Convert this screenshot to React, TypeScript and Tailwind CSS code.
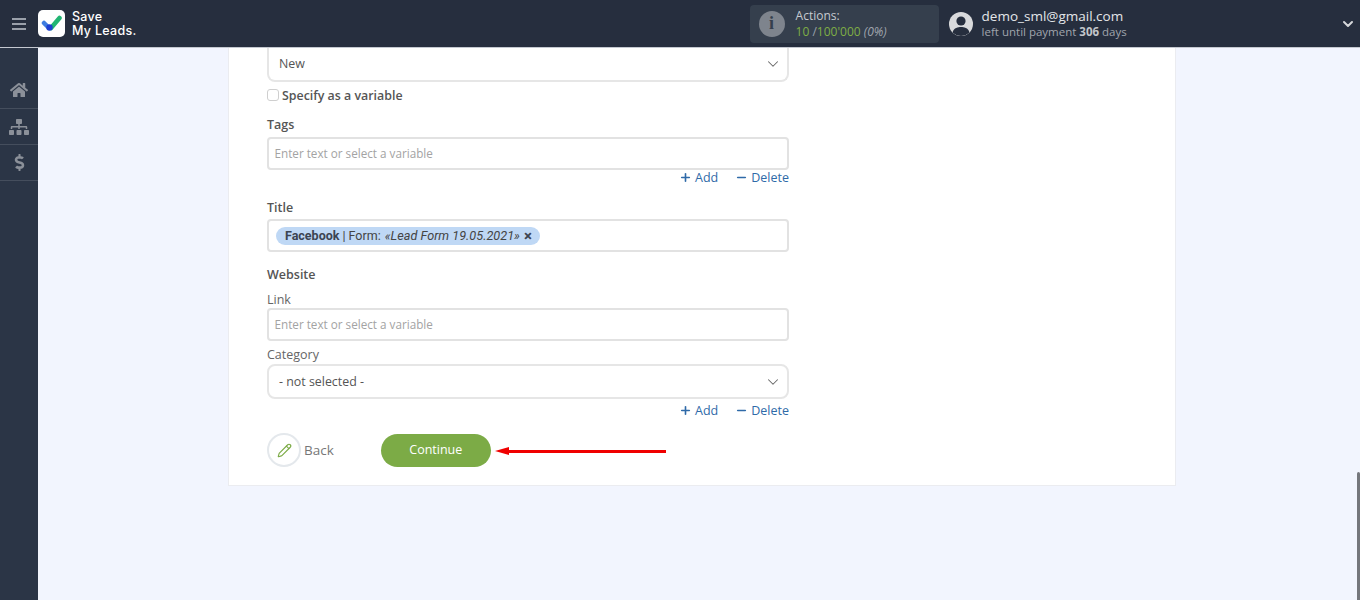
import { ChevronDown, Minus, Pencil, Plus } from 'lucide-react'
import { FaDollarSign, FaHome, FaSitemap } from 'react-icons/fa'

function AddDelete() {
  return (
    <div className="flex justify-end gap-[17px] h-[17px] text-[12.5px] leading-[17px] text-[#2f6aa8]">
      <span className="flex items-center gap-[3px]">
        <Plus size={13} strokeWidth={3} />
        Add
      </span>
      <span className="flex items-center gap-[3px]">
        <Minus size={13} strokeWidth={3} />
        Delete
      </span>
    </div>
  )
}

function TextField() {
  return (
    <div className="h-[33px] rounded-[4px] border-2 border-[#e2e2e2] bg-white pl-[5.5px] flex items-center text-[11.7px] text-[#a3a3a3]">
      Enter text or select a variable
    </div>
  )
}

function SelectField({ value, className }: { value: string; className: string }) {
  return (
    <div className={`rounded-[8px] border-2 border-[#e6e6e6] bg-white pl-[10px] pr-[5px] flex items-center justify-between text-[12.4px] text-[#555] ${className}`}>
      {value}
      <ChevronDown size={18} strokeWidth={1.4} className="text-[#666]" />
    </div>
  )
}

export default function App() {
  return (
    <div className="relative h-[600px] overflow-hidden bg-[#f2f5fe] font-['Open_Sans',sans-serif]">
      <header className="h-[48px] bg-[#262e3e] border-b border-[#c4c8d0] flex items-center text-white">
        <div className="w-[38px] flex justify-center">
          <div className="flex flex-col gap-[3px] w-[14px]">
            <span className="h-[2px] bg-[#9aa0aa]" />
            <span className="h-[2px] bg-[#9aa0aa]" />
            <span className="h-[2px] bg-[#9aa0aa]" />
          </div>
        </div>
        <div className="w-[27px] h-[27px] rounded-[5px] bg-white flex items-center justify-center">
          <svg width="21" height="17" viewBox="0 0 21 17" fill="none">
            <path d="M10 13 L18.5 3" stroke="#22b573" strokeWidth="4.5" strokeLinecap="round" />
            <path d="M3 8 L8 13" stroke="#3f7de0" strokeWidth="4.5" strokeLinecap="round" />
            <circle cx="8.5" cy="12.5" r="3.2" fill="#1f3fd0" />
          </svg>
        </div>
        <div className="ml-[7px] font-['Inter',sans-serif] font-medium text-[12.5px] leading-[14px] tracking-[0.3px] mt-[1px]">
          <div>Save</div>
          <div>My Leads.</div>
        </div>
        <div className="ml-[613px] w-[189px] h-[38px] rounded-[4px] bg-[#353f4d] flex items-center pl-[9px]">
          <div className="w-[26px] h-[26px] rounded-full bg-[#7e848d] flex items-center justify-center font-['Liberation_Serif',serif] font-bold text-[18px] text-[#353f4d]">
            i
          </div>
          <div className="ml-[11px] text-[12px] leading-[15px] -mt-[1px]">
            <div className="text-[#c6cad0]">Actions:</div>
            <div className="text-[12px] mt-[1px] text-[#7fae45]">
              10 <span className="text-[#9aa0aa]">/</span>100'000 <i className="text-[#a0a5ad]">(0%)</i>
            </div>
          </div>
        </div>
        <div className="ml-[10px] w-[24px] h-[24px] rounded-full bg-[#d9dadc] overflow-hidden relative shrink-0">
          <svg width="24" height="24" viewBox="0 0 24 24">
            <circle cx="12" cy="9" r="4.6" fill="#262e3e" />
            <path d="M3.5 20.5 C5 15.5 9 15 12 15 C15 15 19 15.5 20.5 20.5 C18 23 15 24 12 24 C9 24 6 23 3.5 20.5 Z" fill="#262e3e" />
          </svg>
        </div>
        <div className="ml-[9px] -mt-[1px]">
          <div className="text-[13.5px] leading-[16px] text-[#e4e6e9]">demo_sml@gmail.com</div>
          <div className="text-[11.5px] leading-[14px] mt-[1px] text-[#a0a5ad]">
            left until payment <b className="text-[#c2c5ca]">306</b> days
          </div>
        </div>
        <ChevronDown size={16} strokeWidth={3} className="ml-auto mr-[4px] text-[#d5d7da]" />
      </header>

      <div className="flex h-[552px]">
        <aside className="w-[38px] shrink-0 bg-[#2b3546] pt-[24px] text-[#8b9099]">
          <div className="h-[37px] border-b border-[#454e5d] flex items-center justify-center">
            <FaHome size={18} />
          </div>
          <div className="h-[36px] border-b border-[#454e5d] flex items-center justify-center">
            <FaSitemap size={20} />
          </div>
          <div className="h-[36px] border-b border-[#454e5d] flex items-center justify-center">
            <FaDollarSign size={17} />
          </div>
        </aside>

        <main className="flex-1 pl-[190px]">
          <div className="w-[948px] h-[438px] bg-white border border-t-0 border-[#ebecf0] pl-[38px] pr-[386px]">
            <SelectField value="New" className="h-[34px] rounded-t-none border-t-0" />
            <label className="flex items-center h-[14px] mt-[7px] text-[12.4px] font-semibold text-[#555]">
              <span className="w-[12px] h-[12px] rounded-[3px] border border-[#cfcfcf] bg-white mr-[3px] -mt-[2px]" />
              Specify as a variable
            </label>
            <div className="mt-[12px] h-[18px] text-[12.5px] leading-[20px] font-semibold text-[#555]">Tags</div>
            <div className="mt-[4px]">
              <TextField />
            </div>
            <div className="-mt-[1px]">
              <AddDelete />
            </div>
            <div className="mt-[12px] h-[18px] text-[12.5px] leading-[20px] font-semibold text-[#555]">Title</div>
            <div className="mt-[3px] h-[33px] rounded-[4px] border-2 border-[#e2e2e2] bg-white pl-[7px] pt-[1px] flex items-center">
              <span className="h-[18px] rounded-full bg-[#bfd8f5] pl-[9px] pr-[8px] flex items-center font-['Roboto',sans-serif] text-[12.5px] text-[#444]">
                <b className="text-[#3c4452] mr-[3px]">Facebook</b>
                <span className="mr-[4px]">| Form:</span>
                <i className="text-[12.7px] mr-[4px]">«Lead Form 19.05.2021»</i>
                <span className="font-bold text-[15px] leading-none text-[#3c4452]">×</span>
              </span>
            </div>
            <div className="mt-[13px] h-[18px] text-[12.5px] leading-[20px] font-semibold text-[#555]">Website</div>
            <div className="mt-[7px] h-[18px] text-[12.5px] leading-[20px] text-[#666]">Link</div>
            <TextField />
            <div className="mt-[4px] h-[18px] text-[12.5px] leading-[20px] text-[#666]">Category</div>
            <div className="mt-[1px]">
              <SelectField value="- not selected -" className="h-[35px] pt-[1px]" />
            </div>
            <div className="mt-[3px]">
              <AddDelete />
            </div>
            <div className="mt-[14px] flex items-center">
              <div className="w-[34px] h-[34px] rounded-full border-2 border-[#e4e8ec] flex items-center justify-center text-[#7cab46]">
                <Pencil size={15} strokeWidth={1.8} />
              </div>
              <span className="ml-[3px] text-[13.5px] text-[#777]">Back</span>
              <button className="ml-[47px] w-[110px] h-[33px] rounded-full bg-[#7cab46] text-[12.5px] text-white">Continue</button>
            </div>
          </div>
        </main>
      </div>

      <div className="absolute left-[505px] top-[450px] w-[161px] h-[3px] bg-[#f00000]" />
      <div className="absolute left-[495px] top-[447px] w-0 h-0 border-y-[4.5px] border-y-transparent border-r-[14px] border-r-[#f00000]" />
      <div className="absolute right-0 top-[472px] w-[3px] h-[128px] rounded-t-[2px] bg-[#75777c]" />
    </div>
  )
}
